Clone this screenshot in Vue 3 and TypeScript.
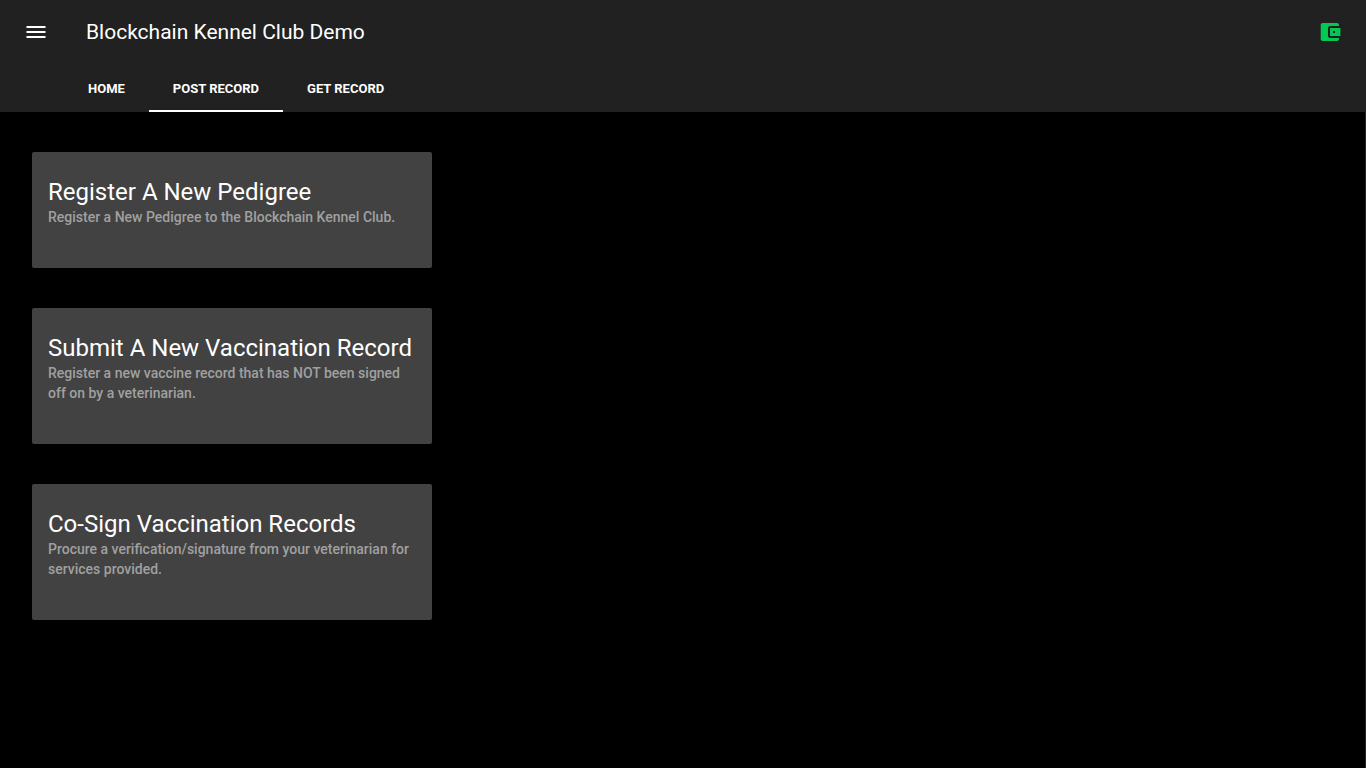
<script setup lang="ts">
import { ref } from 'vue'

interface Tab {
  id: string
  label: string
}

interface RecordAction {
  title: string
  text: string
}

const tabs: Tab[] = [
  { id: 'home', label: 'Home' },
  { id: 'post', label: 'Post Record' },
  { id: 'get', label: 'Get Record' },
]

const active = ref<string>('post')

const actions: RecordAction[] = [
  {
    title: 'Register A New Pedigree',
    text: 'Register a New Pedigree to the Blockchain Kennel Club.',
  },
  {
    title: 'Submit A New Vaccination Record',
    text: 'Register a new vaccine record that has NOT been signed off on by a veterinarian.',
  },
  {
    title: 'Co-Sign Vaccination Records',
    text: 'Procure a verification/signature from your veterinarian for services provided.',
  },
]
</script>

<template>
  <div class="app">
    <header class="toolbar">
      <div class="bar">
        <button class="icon-btn" type="button" aria-label="Open menu">
          <svg viewBox="0 0 24 24" aria-hidden="true">
            <path d="M2.5 18h19v-2h-19v2zm0-5h19v-2h-19v2zm0-7v2h19V6h-19z" />
          </svg>
        </button>
        <h1 class="title">Blockchain Kennel Club Demo</h1>
        <button class="icon-btn wallet" type="button" aria-label="Wallet">
          <svg viewBox="0 0 24 24" aria-hidden="true">
            <path
              d="M21 18v1c0 1.1-.9 2-2 2H4.7c-1.11 0-2-.9-2-2V5c0-1.1.89-2 2-2H19c1.1 0 2 .9 2 2v1h-9c-1.11 0-2 .9-2 2v8c0 1.1.89 2 2 2h9zm-9-2h10.4V8H12v8zm3-3v-2h2v2z"
            />
          </svg>
        </button>
      </div>
      <nav class="tabs" role="tablist">
        <button
          v-for="tab in tabs"
          :key="tab.id"
          class="tab"
          :class="{ active: tab.id === active }"
          type="button"
          role="tab"
          :aria-selected="tab.id === active"
          @click="active = tab.id"
        >
          {{ tab.label }}
        </button>
      </nav>
    </header>
    <main class="content">
      <article v-for="action in actions" :key="action.title" class="card">
        <h2>{{ action.title }}</h2>
        <p>{{ action.text }}</p>
      </article>
    </main>
  </div>
</template>

<style>
body {
  background: #000;
}
</style>

<style scoped>
.app {
  display: flex;
  flex-direction: column;
  min-height: 100vh;
  background: #000;
  color: #fff;
  font-family: Roboto, sans-serif;
}

.toolbar {
  background: #212121;
}

.bar {
  display: flex;
  align-items: center;
  height: 64px;
  padding: 0 18px;
}

.icon-btn {
  display: flex;
  align-items: center;
  justify-content: center;
  width: 36px;
  height: 36px;
  padding: 0;
  border: 0;
  border-radius: 50%;
  background: none;
  color: #fff;
  cursor: pointer;
}

.icon-btn svg {
  width: 24px;
  height: 24px;
  fill: currentColor;
}

.icon-btn.wallet {
  margin-left: auto;
  color: #00c853;
}

.title {
  margin: 0 0 0 32px;
  font-size: 21px;
  font-weight: 400;
  line-height: 28px;
}

.tabs {
  display: flex;
  height: 48px;
  padding-left: 64px;
}

.tab {
  padding: 2px 24px 0;
  border: 0;
  border-bottom: 2px solid transparent;
  background: none;
  color: #fff;
  font-family: inherit;
  font-size: 13px;
  font-weight: 700;
  text-transform: uppercase;
  cursor: pointer;
}

.tab.active {
  border-bottom-color: #fff;
}

.content {
  display: grid;
  flex: 1;
  align-content: start;
  gap: 40px;
  padding: 40px 32px;
  border-right: 1px solid #262626;
}

.card {
  box-sizing: border-box;
  width: 100%;
  max-width: 400px;
  padding: 25px 16px 41px;
  border-radius: 2px;
  background: #424242;
}

.card h2 {
  margin: 0;
  font-size: 24px;
  font-weight: 400;
  line-height: 30px;
}

.card p {
  margin: 0;
  color: #a0a0a0;
  font-size: 14px;
  font-weight: 500;
  line-height: 20px;
}
</style>
